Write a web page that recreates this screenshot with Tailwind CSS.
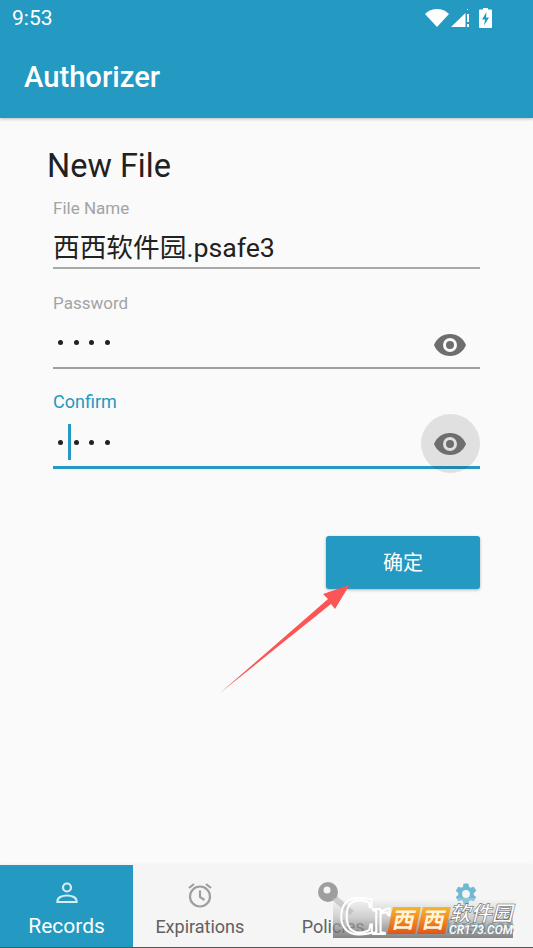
<!DOCTYPE html>
<html lang="en">
<head>
  <meta charset="UTF-8" />
  <meta name="viewport" content="width=device-width, initial-scale=1.0" />
  <title>Authorizer</title>
  <script src="https://cdn.jsdelivr.net/npm/@tailwindcss/browser@4"></script>
</head>
<body class="bg-[#fafafa] font-['Roboto','Noto_Sans_CJK_SC',sans-serif]">
  <div class="relative w-[533px] h-[948px] overflow-hidden flex flex-col">

    <!-- Header -->
    <header class="h-[118px] bg-[#2499c1] text-white shadow-[0_1px_3px_rgba(0,0,0,0.25)] z-10 shrink-0">
      <div class="h-[36px] flex items-center justify-between pl-[12px] pr-[41px]">
        <span class="text-[21px] leading-none">9:53</span>
        <div class="flex items-center">
          <svg width="24" height="20" viewBox="0 0 24 20"><path d="M0 6C3.500 2.800 7.500 1 12 1S20.500 2.800 24 6L12 19Z" fill="#fff"/></svg>
          <svg width="21" height="20" viewBox="0 0 21 20" class="ml-[1px] mr-[8px]"><path d="M1 19L15.500 5V19Z" fill="#fff"/><path d="M17 1h1v1h-1zM17 6h2v8h-2zM17 16h2v3h-2z" fill="#fff"/></svg>
          <svg width="13" height="20" viewBox="0 0 13 20"><path d="M4 0h5v1.500h3a1 1 0 0 1 1 1V19a1 1 0 0 1-1 1H1a1 1 0 0 1-1-1V2.500a1 1 0 0 1 1-1h3Z" fill="#fff"/><path d="M7.500 4L3 11.500H6L5 17.500 10 9.500H7Z" fill="#2499c1"/></svg>
        </div>
      </div>
      <div class="h-[82px] flex items-center pl-[24px] pt-[2px]">
        <h1 class="text-[29.200px] leading-none font-medium">Authorizer</h1>
      </div>
    </header>

    <!-- Form -->
    <main class="flex-1 pl-[48px] pr-[53px] pt-[29px]">
      <h2 class="text-[32.500px] leading-[38px] text-[#212121] -ml-px">New File</h2>
      <div class="pl-[5px]">
        <div class="mt-[13px] h-[71px] border-b-2 border-[#a8a8a8] flex flex-col">
          <label class="text-[17px] leading-[20px] text-[#a3a3a3]">File Name</label>
          <div class="mt-[12px] text-[26.700px] leading-[36px] text-[#212121]">西西软件园.psafe3</div>
        </div>

        <div class="mt-[24px] h-[76px] border-b-2 border-[#a0a0a0] flex flex-col">
          <label class="text-[17px] leading-[20px] text-[#a3a3a3]">Password</label>
          <div class="flex-1 flex items-center justify-between pl-[5px] pr-[13px] pt-[10px]">
            <div class="flex gap-[10.600px] mb-[6px]">
              <i class="w-[5px] h-[5px] rounded-full bg-[#212121] block"></i>
              <i class="w-[5px] h-[5px] rounded-full bg-[#212121] block"></i>
              <i class="w-[5px] h-[5px] rounded-full bg-[#212121] block"></i>
              <i class="w-[5px] h-[5px] rounded-full bg-[#212121] block"></i>
            </div>
            <svg width="34" height="24" viewBox="0 0 34 24"><path fill-rule="evenodd" d="M17 1C9.500 1 3.500 5.500 1 12c2.500 6.500 8.500 11 16 11s13.500-4.500 16-11C30.500 5.500 24.500 1 17 1Zm0 18a7 7 0 1 1 0-14 7 7 0 0 1 0 14Zm0-11a4 4 0 1 0 0 8 4 4 0 0 0 0-8Z" fill="#6e6e6e"/></svg>
          </div>
        </div>

        <div class="mt-[22px] h-[78px] border-b-[3px] border-[#2499c1] flex flex-col relative">
          <label class="text-[18px] leading-[22px] text-[#2499c1]">Confirm</label>
          <div class="flex-1 flex items-center pl-[5px] pt-[5px]">
            <div class="flex gap-[10.600px] relative">
              <i class="w-[5px] h-[5px] rounded-full bg-[#212121] block"></i>
              <i class="w-[5px] h-[5px] rounded-full bg-[#212121] block"></i>
              <i class="w-[5px] h-[5px] rounded-full bg-[#212121] block"></i>
              <i class="w-[5px] h-[5px] rounded-full bg-[#212121] block"></i>
              <span class="absolute left-[10px] top-[-16px] w-[3px] h-[36px] bg-[#2499c1]"></span>
            </div>
          </div>
          <div class="absolute right-0 top-[23px] w-[59px] h-[59px] rounded-full bg-black/10 flex items-center justify-center pr-[1px]">
            <svg width="34" height="24" viewBox="0 0 34 24"><path fill-rule="evenodd" d="M17 1C9.500 1 3.500 5.500 1 12c2.500 6.500 8.500 11 16 11s13.500-4.500 16-11C30.500 5.500 24.500 1 17 1Zm0 18a7 7 0 1 1 0-14 7 7 0 0 1 0 14Zm0-11a4 4 0 1 0 0 8 4 4 0 0 0 0-8Z" fill="#6e6e6e"/></svg>
          </div>
        </div>

        <div class="flex justify-end mt-[67px]">
          <button class="w-[154px] h-[53px] rounded-[3px] bg-[#2499c1] text-white text-[20px] shadow-[0_1px_3px_rgba(0,0,0,0.3)]">确定</button>
        </div>
      </div>
    </main>

    <!-- Bottom tabs -->
    <nav class="h-[83px] bg-[#f5f5f5] border-b border-[#555] shadow-[0_-1px_2px_rgba(0,0,0,0.04)] grid grid-cols-4 shrink-0">
      <div class="bg-[#2499c1] text-white flex flex-col items-center pt-[16px]">
        <svg width="24" height="24" viewBox="0 0 24 24" fill="none" stroke="#d5eef6" stroke-width="2.200"><circle cx="12" cy="6.500" r="4"/><path d="M2.500 21v-1.500c0-2.500 4-5 9.500-5s9.500 2.500 9.500 5V21Z"/></svg>
        <span class="text-[21px] leading-[24px] mt-[9px]">Records</span>
      </div>
      <div class="text-[#616161] flex flex-col items-center pt-[17px]">
        <svg width="26" height="26" viewBox="0 0 26 26" fill="none" stroke="#9e9e9e" stroke-width="2.200"><circle cx="13" cy="14.500" r="10"/><path d="M13 8.500v6.500l4.500 3M2 6l5-4M24 6l-5-4"/></svg>
        <span class="text-[18px] leading-[22px] mt-[8px]">Expirations</span>
      </div>
      <div class="text-[#616161] flex flex-col items-center pt-[17px]">
        <svg width="38" height="34" viewBox="0 0 38 34" class="ml-[7px]"><path d="M14 14L34 31" stroke="#c4c4c4" stroke-width="6"/><circle cx="10" cy="10" r="10" fill="#9e9e9e"/><circle cx="9" cy="8" r="3.500" fill="#f5f5f5"/></svg>
        <span class="text-[18px] leading-[22px]">Policies</span>
      </div>
      <div class="text-[#2499c1] flex flex-col items-center pt-[17px]">
        <svg width="26" height="26" viewBox="0 0 24 24" class="-mt-[1px]"><path fill="#6fb9d5" d="M19.140 12.940c.04-.3.060-.61.060-.94s-.020-.64-.070-.94l2.030-1.580a.5.5 0 0 0 .12-.61l-1.920-3.320a.5.5 0 0 0-.59-.22l-2.390.96a7 7 0 0 0-1.620-.94l-.36-2.540a.5.5 0 0 0-.48-.41h-3.840a.5.5 0 0 0-.47.41l-.36 2.540c-.59.24-1.130.57-1.620.94l-2.390-.96a.5.5 0 0 0-.59.22L2.740 8.870a.5.5 0 0 0 .12.61l2.030 1.580c-.05.3-.09.63-.09.94s.020.64.070.94l-2.030 1.580a.5.5 0 0 0-.12.61l1.920 3.320c.12.22.37.29.59.22l2.390-.96c.5.380 1.030.7 1.620.94l.36 2.540c.05.24.24.41.48.41h3.840c.24 0 .44-.17.47-.41l.36-2.540c.59-.24 1.130-.56 1.620-.94l2.390.96c.22.080.47 0 .59-.22l1.920-3.320a.5.5 0 0 0-.12-.61ZM12 15.600a3.600 3.600 0 1 1 0-7.200 3.600 3.600 0 0 1 0 7.200Z"/></svg>
        <span class="text-[18px] leading-[22px] mt-[9px]">Preferences</span>
      </div>
    </nav>

    <!-- Annotation arrow over the screenshot -->
    <svg class="absolute left-0 top-0 pointer-events-none" width="533" height="948" viewBox="0 0 533 948"><path d="M220 693L328 599 323 594 349.500 585 335 609 331 604Z" fill="#fb5555"/></svg>

    <!-- Watermark over the tabs -->
    <div class="absolute left-[333px] top-[898px] w-[180px] h-[40px] bg-gradient-to-b from-white/20 via-[#bdbdbd]/70 to-[#5f5f5f]/75">
      <span class="absolute left-[6px] -top-[9px] font-['Liberation_Serif',serif] text-[54px] leading-none text-[#d8d8d8]/30 [-webkit-text-stroke:2px_#fff] tracking-[-3px]">Cr</span>
      <div class="absolute left-[57px] top-[9px] flex gap-[2px] skew-x-[-12deg]">
        <span class="w-[28px] h-[27px] bg-gradient-to-b from-[#f7b52c] to-[#e2531a] text-[#fff3d8] font-bold text-[22px] leading-[27px] text-center">西</span>
        <span class="w-[28px] h-[27px] bg-gradient-to-b from-[#f7b52c] to-[#e2531a] text-[#fff3d8] font-bold text-[22px] leading-[27px] text-center">西</span>
      </div>
      <div class="absolute left-[116px] top-[6px] w-[64px] flex flex-col items-center text-white">
        <span class="text-[21px] font-bold italic leading-[21px] [-webkit-text-stroke:0.500px_#555]">软件园</span>
        <span class="text-[12px] font-medium italic leading-[11px]">CR173.COM</span>
      </div>
    </div>
  </div>
</body>
</html>
